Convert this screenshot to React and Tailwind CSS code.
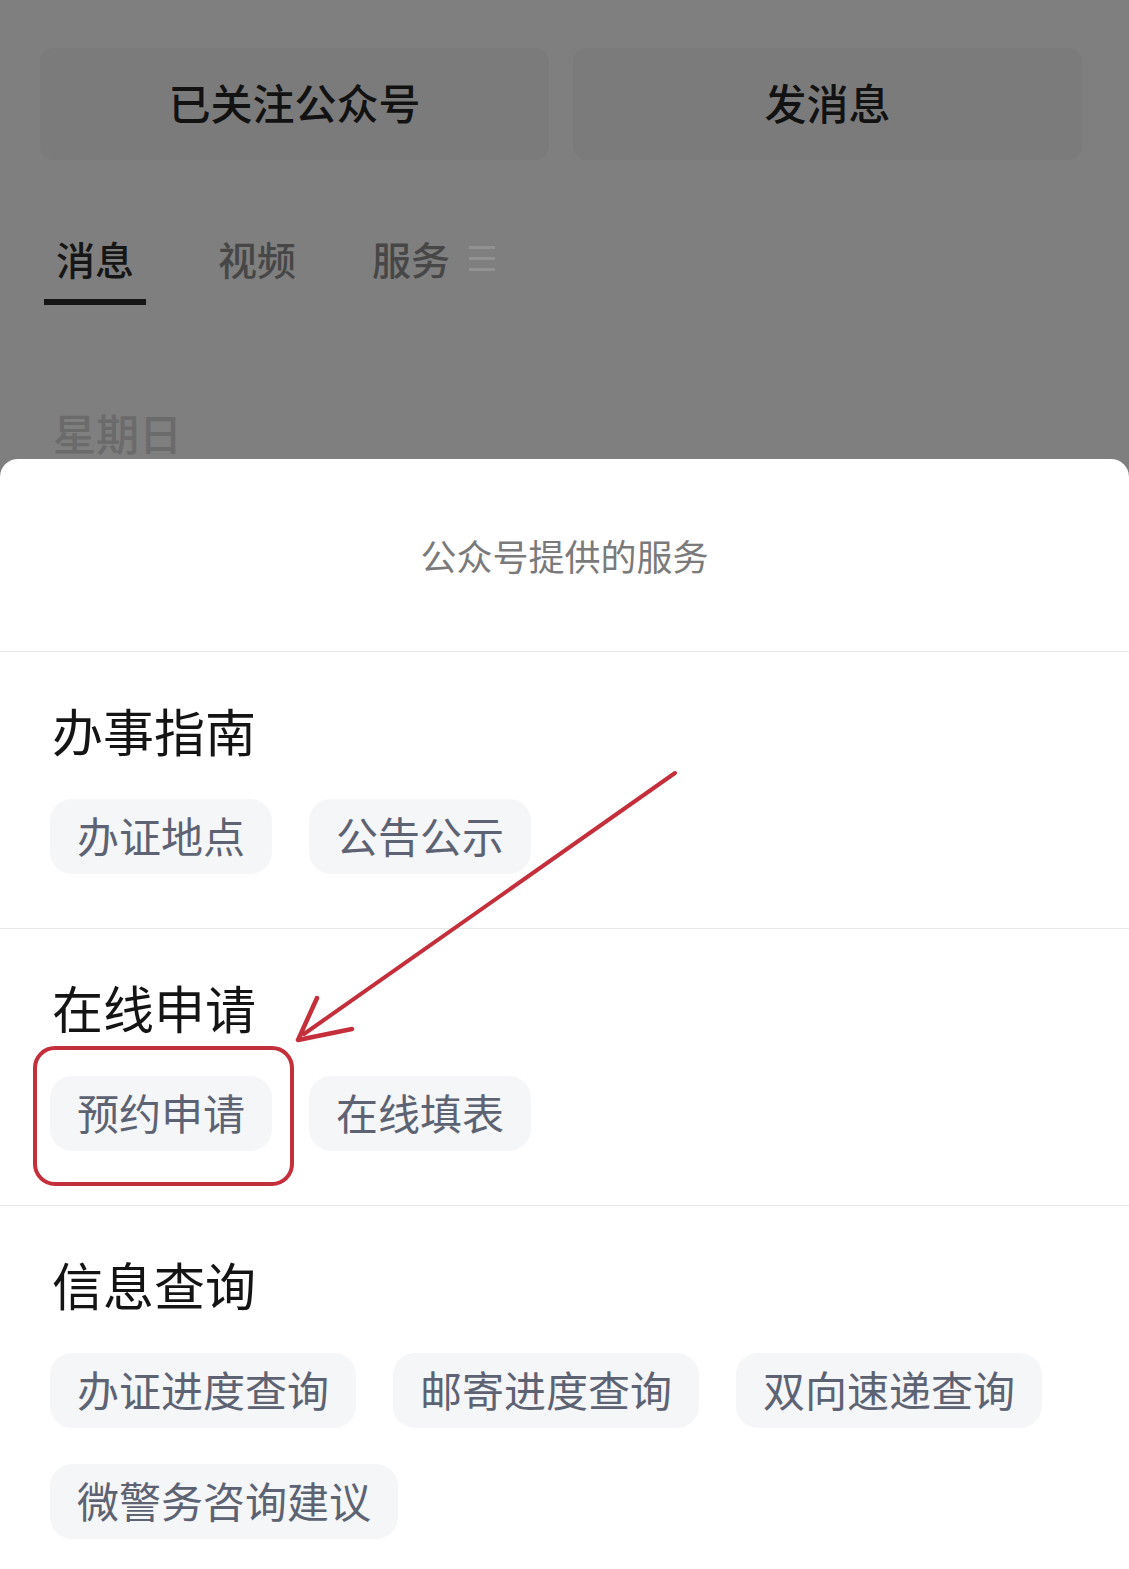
import React from "react";

const sections = [
  { title: "办事指南", items: ["办证地点", "公告公示"] },
  { title: "在线申请", items: ["预约申请", "在线填表"] },
  { title: "信息查询", items: ["办证进度查询", "邮寄进度查询", "双向速递查询", "微警务咨询建议"] },
];

const Chip = ({ label }) => (
  <div className="h-[75px] px-[27px] pb-[3px] flex items-center rounded-[22px] bg-[#f5f6f7] text-[42px] leading-none text-[#5d6373]">
    {label}
  </div>
);

const App = () => {
  return (
    <div className="relative w-[1129px] h-[1569px] overflow-hidden bg-[#7f7f7f] font-['Noto_Sans_CJK_SC',sans-serif]">
      {/* dimmed page behind the sheet */}
      <div className="h-[459px] flex flex-col">
        <div className="grid grid-cols-2 gap-[24px] pl-[40px] pr-[47px] pt-[48px]">
          <div className="h-[112px] pb-[6px] rounded-[14px] bg-[#7b7b7b] flex items-center justify-center text-[42px] font-medium text-[#121212]">
            已关注公众号
          </div>
          <div className="h-[112px] pb-[6px] rounded-[14px] bg-[#7b7b7b] flex items-center justify-center text-[42px] font-medium text-[#121212]">
            发消息
          </div>
        </div>

        <div className="flex items-start pl-[44px] mt-[74px]">
          <div className="w-[102px] flex flex-col items-center">
            <span className="text-[39px] leading-[48px] font-medium text-[#161616]">消息</span>
            <div className="mt-[17px] h-[6px] w-full bg-[#151515]" />
          </div>
          <span className="ml-[72px] text-[39px] leading-[48px] font-medium text-[#474747]">视频</span>
          <span className="ml-[76px] text-[39px] leading-[48px] font-medium text-[#474747]">服务</span>
          <div className="ml-[19px] mt-[12px] flex flex-col gap-[8px]">
            <div className="h-[3px] w-[26px] bg-[#929292]" />
            <div className="h-[3px] w-[26px] bg-[#929292]" />
            <div className="h-[3px] w-[26px] bg-[#929292]" />
          </div>
        </div>

        <div className="mt-[103px] pl-[53px] text-[43px] leading-[48px] font-medium text-[#6b6b6b]">星期日</div>
      </div>

      {/* bottom sheet */}
      <div className="bg-white rounded-t-[18px] h-[1110px]">
        <div className="h-[192px] flex items-center justify-center text-[36px] text-[#7a7a7a]">
          公众号提供的服务
        </div>
        {sections.map((s) => (
          <div key={s.title} className="border-t border-[#e7e7e7] px-[50px] pt-[53px] pb-[54px]">
            <div className="pl-[2px] text-[51px] leading-[51px] text-[#141414]">{s.title}</div>
            <div className="mt-[43px] flex flex-wrap gap-x-[37px] gap-y-[36px]">
              {s.items.map((item) => (
                <Chip key={item} label={item} />
              ))}
            </div>
          </div>
        ))}
      </div>

      {/* red annotation */}
      <svg className="absolute left-0 top-0 pointer-events-none" width="1129" height="1569" viewBox="0 0 1129 1569" fill="none">
        <rect x="35" y="1048" width="257" height="136" rx="20" stroke="#c42f3b" strokeWidth="4" />
        <path d="M675 773 L304 1034" stroke="#c42f3b" strokeWidth="4" strokeLinecap="round" />
        <path d="M317 998 L298 1040 L352 1029" stroke="#c42f3b" strokeWidth="4.5" strokeLinecap="round" strokeLinejoin="round" />
      </svg>
    </div>
  );
};

export default App;
